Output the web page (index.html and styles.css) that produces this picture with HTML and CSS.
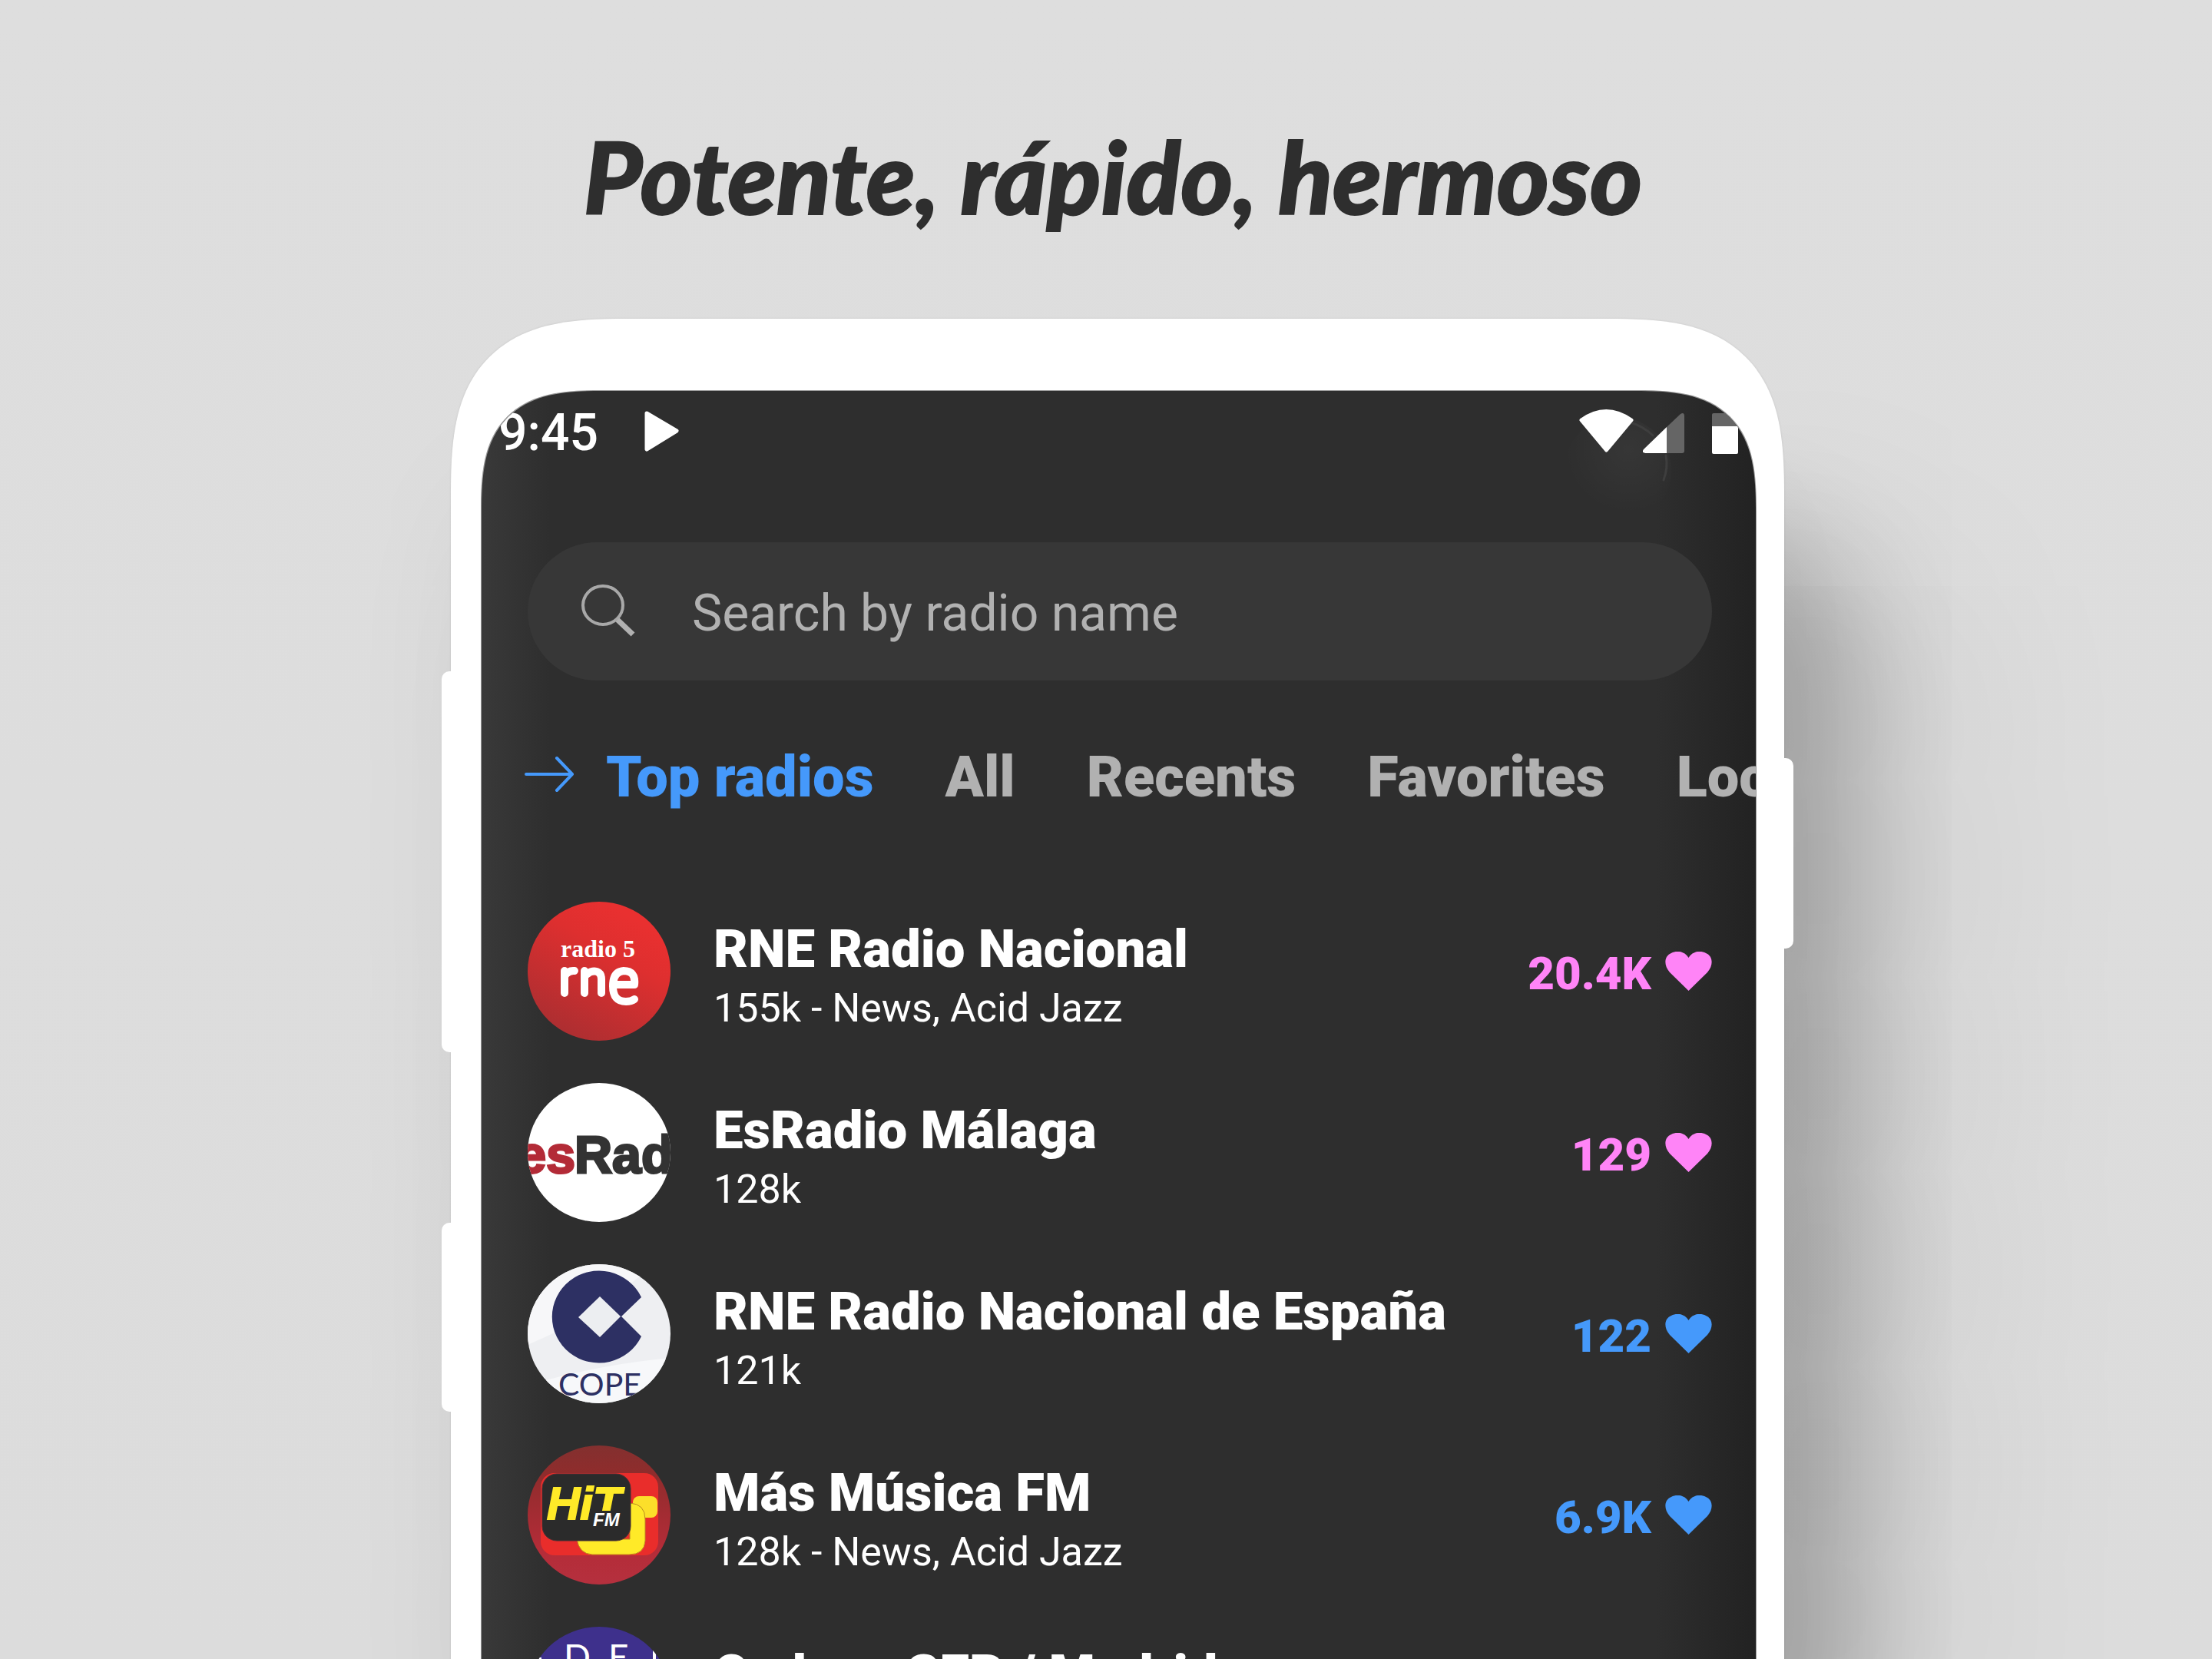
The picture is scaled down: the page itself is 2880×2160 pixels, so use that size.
FILE: index.html
```html
<!DOCTYPE html>
<html lang="es">
<head>
<meta charset="utf-8">
<meta name="viewport" content="width=device-width, initial-scale=1">
<title>Potente, rápido, hermoso</title>
<link rel="stylesheet" href="styles.css">
</head>
<body>
<main class="stage">
  <h1 class="headline">Potente, rápido, hermoso</h1>
  <div class="phone">
    <span class="side-key volume"></span>
    <span class="side-key assistant"></span>
    <span class="side-key power"></span>
    <div class="screen">
      <header class="status">
        <svg class="camera" viewBox="0 0 140 140" width="140" height="140" aria-hidden="true"><path d="M84 6Q104 12 116 24M133 50Q136 66 130 82" fill="none" stroke="#3e3e3e" stroke-width="3" stroke-linecap="round"/></svg>
        <time class="clock">9:45</time>
        <svg class="play" viewBox="0 0 46 64" width="46" height="64" aria-hidden="true"><path d="M3 6L42 29L3 53Z" fill="#fff" stroke="#fff" stroke-width="5" stroke-linejoin="round"/></svg>
        <svg class="wifi" viewBox="0 0 71 64" width="71" height="64" aria-hidden="true"><path d="M3 15Q35 -8 68 15L35.500 54Z" fill="#fff" stroke="#fff" stroke-width="5" stroke-linejoin="round"/></svg>
        <svg class="signal" viewBox="0 0 54 64" width="54" height="64" aria-hidden="true"><path d="M31 24L49 7Q54 4 54 10V55Q54 58 51 58H31Z" fill="#656565"/><path d="M31 24V58H3Q-2 57 1 53Z" fill="#fff"/></svg>
        <svg class="battery" viewBox="0 0 34 64" width="34" height="64" aria-hidden="true"><path d="M0 23V8Q0 6 2 6H32Q34 6 34 8V23Z" fill="#656565"/><path d="M0 23H34V57Q34 59 32 59H2Q0 59 0 57Z" fill="#fff"/></svg>
      </header>

      <label class="search">
        <svg viewBox="0 0 72 72" width="72" height="72" aria-hidden="true"><ellipse cx="28" cy="28" rx="26" ry="25" fill="none" stroke="#a8a8a8" stroke-width="4"/><path d="M47 47L67 66" stroke="#b1b1b1" stroke-width="7"/></svg>
        <input type="search" placeholder="Search by radio name" aria-label="Search by radio name">
      </label>

      <nav class="tabs">
        <svg viewBox="0 0 66 84" width="66" height="84" aria-hidden="true"><path d="M2 38H62M42 17L62 38L42 59" fill="none" stroke="#4599fb" stroke-width="4" stroke-linecap="round" stroke-linejoin="round"/></svg>
        <a class="tab active" href="#top">Top radios</a>
        <a class="tab" href="#all">All</a>
        <a class="tab" href="#recents">Recents</a>
        <a class="tab" href="#favorites">Favorites</a>
        <a class="tab" href="#local">Local</a>
      </nav>

      <ul class="stations">
        <li class="station">
          <svg class="logo" viewBox="0 0 186 181" aria-hidden="true">
            <defs><linearGradient id="rne" x1="0.8" y1="0.15" x2="0.3" y2="1"><stop offset="0" stop-color="#e93030"/><stop offset="0.3" stop-color="#de2f2f"/><stop offset="1" stop-color="#ab2e31"/></linearGradient></defs>
            <rect width="186" height="181" fill="url(#rne)"/>
            <text class="rne-top" x="43" y="72">radio 5</text>
            <g fill="none" stroke="#fff" stroke-width="10" stroke-linecap="round" stroke-linejoin="round">
              <path d="M48 119V90M48 97Q53 89 61 90"/>
              <path d="M74 119V90M74 97Q82 89 90 91Q96 93 96 101V119"/>
              <path d="M111 108H139Q141 90 125 90Q111 91 111 110Q111 130 128 130Q135 130 139 127"/>
            </g>
          </svg>
          <div class="info"><h2>RNE Radio Nacional</h2><p>155k - News, Acid Jazz</p></div>
          <button class="likes pink" type="button">20.4K <svg viewBox="0 0 61 51" width="61" height="51" aria-hidden="true"><path d="M30.500 51L6 27C-2 18-1 7 6 3C15-3 26 0 30.500 8C35 0 46-3 55 3C62 7 63 18 55 27Z" fill="currentColor"/></svg></button>
        </li>
        <li class="station">
          <svg class="logo" viewBox="0 0 186 181" aria-hidden="true">
            <rect width="186" height="181" fill="#fff"/>
            <text class="es-logo" x="62" y="117" text-anchor="end" fill="#b32b37" stroke="#b32b37">es</text>
            <text class="es-logo" x="61" y="117" fill="#333" stroke="#333">Rad</text>
          </svg>
          <div class="info"><h2>EsRadio Málaga</h2><p>128k</p></div>
          <button class="likes pink" type="button">129 <svg viewBox="0 0 61 51" width="61" height="51" aria-hidden="true"><path d="M30.500 51L6 27C-2 18-1 7 6 3C15-3 26 0 30.500 8C35 0 46-3 55 3C62 7 63 18 55 27Z" fill="currentColor"/></svg></button>
        </li>
        <li class="station">
          <svg class="logo" viewBox="0 0 186 181" aria-hidden="true">
            <rect width="186" height="181" fill="#eeeff2"/>
            <path d="M0 0H186L143 18L82 68L0 105Z" fill="#f7f7f9"/>
            <path d="M20 152Q100 130 186 122V181H20Z" fill="#f7f8fa"/>
            <path d="M148 43A61 60 0 1 0 148 94L122 68Z" fill="#2d3063"/>
            <path d="M94 42L121 68L94 95L66 69Z" fill="#eceef1"/>
            <text class="cope" x="40" y="171">COPE</text>
          </svg>
          <div class="info"><h2>RNE Radio Nacional de España</h2><p>121k</p></div>
          <button class="likes blue" type="button">122 <svg viewBox="0 0 61 51" width="61" height="51" aria-hidden="true"><path d="M30.500 51L6 27C-2 18-1 7 6 3C15-3 26 0 30.500 8C35 0 46-3 55 3C62 7 63 18 55 27Z" fill="currentColor"/></svg></button>
        </li>
        <li class="station">
          <svg class="logo" viewBox="0 0 186 181" aria-hidden="true">
            <defs><linearGradient id="hit" x1="0" y1="0" x2="0" y2="1"><stop offset="0" stop-color="#83302f"/><stop offset="0.2" stop-color="#8f2c2c"/><stop offset="0.75" stop-color="#b42c38"/><stop offset="1" stop-color="#b5303e"/></linearGradient></defs>
            <rect width="186" height="181" fill="url(#hit)"/>
            <rect x="17" y="36" width="153" height="107" rx="18" fill="#e92d2b"/>
            <rect x="137" y="66" width="32" height="28" rx="8" fill="#fcdf2a"/>
            <path d="M64 122H133V75Q153 76 153 96V124Q152 142 132 142H84Q67 141 64 122Z" fill="#ffea28" stroke="#b98a20" stroke-width="1"/>
            <rect x="19" y="37" width="115" height="87" rx="19" fill="#2b2b2b" stroke="#4b3035" stroke-width="1"/>
            <text class="hit" x="25" y="96">HiT</text>
            <rect x="84" y="85" width="42" height="26" fill="#2b2b2b"/>
            <text class="hit-fm" x="85" y="105">FM</text>
          </svg>
          <div class="info"><h2>Más Música FM</h2><p>128k - News, Acid Jazz</p></div>
          <button class="likes blue" type="button">6.9K <svg viewBox="0 0 61 51" width="61" height="51" aria-hidden="true"><path d="M30.500 51L6 27C-2 18-1 7 6 3C15-3 26 0 30.500 8C35 0 46-3 55 3C62 7 63 18 55 27Z" fill="currentColor"/></svg></button>
        </li>
        <li class="station">
          <svg class="logo" viewBox="0 0 186 181" aria-hidden="true">
            <rect width="186" height="181" fill="#3e308c"/>
            <path d="M0 40H18V140H0ZM163 30H167V140H163Z" fill="#fff"/>
            <text class="defe" x="47" y="56">D</text>
            <text class="defe" x="105" y="56">E</text>
          </svg>
          <div class="info"><h2>Cadena SER / Madrid</h2><p>128k</p></div>
        </li>
      </ul>
    </div>
  </div>
</main>
</body>
</html>
```
FILE: styles.css
```css
* {
  box-sizing: border-box;
}

body {
  margin: 0;
  background: #dedede;
  color: #fff;
  font-family: Roboto, "Liberation Sans", sans-serif;
}

.stage {
  height: 100vh;
  overflow: hidden;
  padding: 149px 40px 0 70px;
  background: linear-gradient(#dedede, #dcdcdc);
}

.headline {
  margin: 0 0 106px;
  padding-right: 12px;
  color: #2e2e2e;
  font: italic 900 130px/160px Lato, sans-serif;
  text-align: center;
  -webkit-text-stroke: 2px #2e2e2e;
  paint-order: stroke fill;
}

.phone {
  position: relative;
  max-width: 1736px;
  margin: 0 auto;
  padding: 94px 37px 94px 40px;
  border-radius: 178px;
  background: #fff;
  box-shadow:
    0 0 3px rgba(0, 0, 0, 0.1),
    90px 270px 140px rgba(0, 0, 0, 0.22),
    220px 280px 300px rgba(0, 0, 0, 0.08),
    -20px 160px 160px rgba(0, 0, 0, 0.03);
}

.side-key {
  position: absolute;
  width: 12px;
  background: #fff;
}

.volume,
.assistant {
  right: 100%;
  border-radius: 10px 0 0 10px;
}

.volume {
  top: 459px;
  height: 496px;
}

.assistant {
  top: 1177px;
  height: 246px;
}

.power {
  top: 572px;
  left: 100%;
  height: 248px;
  border-radius: 0 10px 10px 0;
}

.screen {
  overflow: hidden;
  padding-bottom: 300px;
  border-radius: 122px;
  background:
    linear-gradient(to right, #393939, rgba(46, 46, 46, 0) 90px),
    linear-gradient(to left, #222, rgba(46, 46, 46, 0) 130px),
    #2e2e2e;
  box-shadow: 0 0 0 1px #9a9a9a;
}

@supports (corner-shape: superellipse(1.5)) {
  .phone {
    border-radius: 230px;
    corner-shape: superellipse(1.5);
  }

  .screen {
    border-radius: 158px;
    corner-shape: superellipse(1.5);
  }
}

.status {
  position: relative;
  display: flex;
  align-items: center;
  padding: 16px 23px 0 22px;
}

.camera {
  position: absolute;
  top: 34px;
  right: 110px;
  border-radius: 50%;
  background: radial-gradient(circle at 60% 30%, rgba(255, 255, 255, 0.04), rgba(255, 255, 255, 0) 65%);
}

.play,
.wifi,
.signal,
.battery {
  position: relative;
}

.clock {
  font-size: 66px;
  font-weight: 500;
  line-height: 78px;
}

.play {
  margin-left: 60px;
}

.wifi {
  margin-left: auto;
}

.signal {
  margin: 0 36px 0 12px;
}

.search {
  display: flex;
  align-items: center;
  height: 180px;
  margin: 103px 57px 0 60px;
  padding: 0 70px;
  border-radius: 90px;
  background: #373737;
}

.search input {
  flex: 1;
  min-width: 0;
  margin-left: 72px;
  padding: 6px 0 0;
  border: 0;
  outline: 0;
  background: none;
  color: #b1b1b1;
  font: 400 66px/78px Roboto, sans-serif;
}

.search input::placeholder {
  color: #b1b1b1;
  opacity: 1;
}

.tabs {
  display: flex;
  align-items: center;
  gap: 93px;
  margin-top: 82px;
  padding-left: 56px;
  overflow: hidden;
  white-space: nowrap;
}

.tabs svg {
  flex: none;
  margin-right: -53px;
}

.tab {
  color: #b1b1b1;
  font: 900 74px/88px Roboto, sans-serif;
  text-decoration: none;
}

.tab.active {
  color: #4599fb;
}

.stations {
  display: grid;
  gap: 55px;
  margin: 118px 57px 0 60px;
  padding: 0;
  list-style: none;
}

.station {
  display: grid;
  grid-template-columns: 186px 1fr auto;
  column-gap: 56px;
  align-items: center;
}

.logo {
  display: block;
  width: 186px;
  height: 181px;
  border-radius: 50%;
}

.info {
  padding-top: 10px;
  white-space: nowrap;
}

.info h2 {
  margin: 0;
  font: 900 69px/80px Roboto, sans-serif;
}

.info p {
  margin: 7px 0 0;
  font-size: 52px;
  line-height: 60px;
}

.likes {
  display: flex;
  align-items: center;
  gap: 18px;
  padding: 6px 0 0;
  border: 0;
  background: none;
  font: 900 60px/76px Roboto, sans-serif;
}

.likes svg {
  margin-bottom: 6px;
}

.pink {
  color: #ff84f7;
}

.blue {
  color: #4599fb;
}

.rne-top {
  fill: #fff;
  font: 700 32px "Liberation Serif", serif;
}

.es-logo {
  stroke-width: 3px;
  font: 700 68px "Liberation Sans", sans-serif;
}

.cope {
  fill: #2d3063;
  font: 400 41px Lato, sans-serif;
}

.hit {
  fill: #ffea28;
  stroke: #ffea28;
  stroke-width: 2px;
  font: italic 700 60px "Liberation Sans", sans-serif;
}

.hit-fm {
  fill: #fff;
  font: italic 700 24px "Liberation Sans", sans-serif;
}

.defe {
  fill: #fff;
  font: 400 46px Lato, sans-serif;
}
```
